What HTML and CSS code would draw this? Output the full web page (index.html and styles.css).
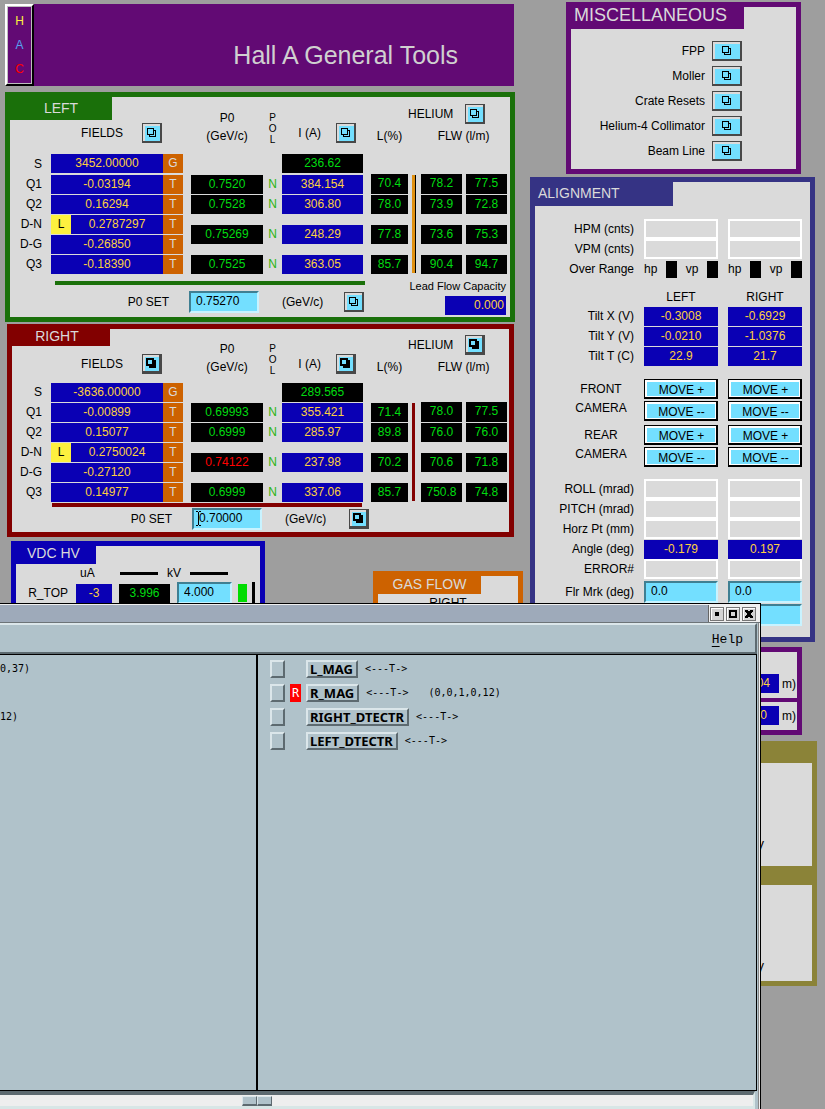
FILE: index.html
```html
<!DOCTYPE html>
<html lang="en">
<head>
<meta charset="utf-8">
<title>Hall A General Tools</title>
<link rel="stylesheet" href="styles.css">
</head>
<body>
<svg class="defs" aria-hidden="true">
  <symbol id="related" viewBox="0 0 10 10"><path d="M.5.5h6v6h-6zM7 2.500h1.500v6h-6V7" fill="none" stroke="#000" shape-rendering="crispEdges"/></symbol>
  <symbol id="related-bold" viewBox="0 0 10 10"><path d="M0 0h8v2h2v8H3V8H0z"/><path d="M2 2h4v4H2z" fill="#73dfff"/></symbol>
</svg>
<main class="desk">
  <div class="col">
    <header class="banner">
      <button class="hac"><span class="h">H</span><span class="a">A</span><span class="c">C</span></button>
      <h1>Hall A General Tools</h1>
    </header>

    <section class="panel arm left">
      <h2>LEFT</h2>
      <table>
        <colgroup><col class="c-label"><col class="c-field"><col class="c-unit"><col class="c-p0"><col class="c-pol"><col class="c-cur"><col class="c-lvl"><col class="c-bar"><col class="c-flw"><col class="c-flw2"><col class="c-end"></colgroup>
        <thead><tr>
          <th colspan="2"><div class="hd fields">FIELDS <button class="icon" aria-label="Fields"><svg><use href="#related"/></svg></button></div></th>
          <th></th>
          <th class="in"><div class="two">P0<br>(GeV/c)</div></th>
          <th><div class="pol">P<br>O<br>L</div></th>
          <th><div class="hd cur">I (A) <button class="icon" aria-label="Current"><svg><use href="#related"/></svg></button></div></th>
          <th class="in"><div class="two">L(%)</div></th>
          <th colspan="3"><div class="hd he">HELIUM <button class="icon" aria-label="Helium"><svg><use href="#related"/></svg></button></div><div class="flw">FLW (l/m)</div></th>
          <th></th>
        </tr></thead>
        <tbody>
          <tr class="first"><th>S</th><td><span class="v">3452.00000</span></td><td><span class="u">G</span></td><td></td><td></td><td><span class="g">236.62</span></td><td></td><td></td><td></td><td></td><td></td></tr>
          <tr><th>Q1</th><td><span class="v">-0.03194</span></td><td><span class="u">T</span></td><td class="in"><span class="g">0.7520</span></td><td class="n">N</td><td><span class="v">384.154</span></td><td class="in"><span class="g join">70.4</span></td><td rowspan="5" class="bar"><i></i></td><td><span class="g join">78.2</span></td><td class="in4"><span class="g join">77.5</span></td><td></td></tr>
          <tr><th>Q2</th><td><span class="v">0.16294</span></td><td><span class="u">T</span></td><td class="in"><span class="g">0.7528</span></td><td class="n">N</td><td><span class="v">306.80</span></td><td class="in"><span class="g">78.0</span></td><td><span class="g">73.9</span></td><td class="in4"><span class="g">72.8</span></td><td></td></tr>
          <tr><th>D-N</th><td><span class="v dn"><b>L</b><span>0.2787297</span></span></td><td><span class="u">T</span></td><td class="in" rowspan="2"><span class="g">0.75269</span></td><td class="n" rowspan="2">N</td><td rowspan="2"><span class="v">248.29</span></td><td class="in" rowspan="2"><span class="g">77.8</span></td><td rowspan="2"><span class="g">73.6</span></td><td class="in4" rowspan="2"><span class="g">75.3</span></td><td></td></tr>
          <tr><th>D-G</th><td><span class="v">-0.26850</span></td><td><span class="u">T</span></td><td></td></tr>
          <tr><th>Q3</th><td><span class="v">-0.18390</span></td><td><span class="u">T</span></td><td class="in"><span class="g">0.7525</span></td><td class="n">N</td><td><span class="v">363.05</span></td><td class="in"><span class="g">85.7</span></td><td><span class="g">90.4</span></td><td class="in4"><span class="g">94.7</span></td><td></td></tr>
        </tbody>
      </table>
      <div class="foot">
        <div class="setbox">
          <hr>
          <div class="set"><label for="p0l">P0 SET</label><input id="p0l" value="0.75270"><span class="gev">(GeV/c)</span><button class="icon" aria-label="Set left momentum"><svg><use href="#related"/></svg></button></div>
        </div>
        <div class="lead">Lead Flow Capacity<span class="v">0.000</span></div>
      </div>
    </section>

    <section class="panel arm right">
      <h2>RIGHT</h2>
      <table>
        <colgroup><col class="c-label"><col class="c-field"><col class="c-unit"><col class="c-p0"><col class="c-pol"><col class="c-cur"><col class="c-lvl"><col class="c-bar"><col class="c-flw"><col class="c-flw2"><col class="c-end"></colgroup>
        <thead><tr>
          <th colspan="2"><div class="hd fields">FIELDS <button class="icon" aria-label="Fields"><svg><use href="#related-bold"/></svg></button></div></th>
          <th></th>
          <th class="in"><div class="two">P0<br>(GeV/c)</div></th>
          <th><div class="pol">P<br>O<br>L</div></th>
          <th><div class="hd cur">I (A) <button class="icon" aria-label="Current"><svg><use href="#related-bold"/></svg></button></div></th>
          <th class="in"><div class="two">L(%)</div></th>
          <th colspan="3"><div class="hd he">HELIUM <button class="icon" aria-label="Helium"><svg><use href="#related-bold"/></svg></button></div><div class="flw">FLW (l/m)</div></th>
          <th></th>
        </tr></thead>
        <tbody>
          <tr><th>S</th><td><span class="v">-3636.00000</span></td><td><span class="u">G</span></td><td></td><td></td><td><span class="g">289.565</span></td><td></td><td></td><td></td><td></td><td></td></tr>
          <tr><th>Q1</th><td><span class="v">-0.00899</span></td><td><span class="u">T</span></td><td class="in"><span class="g">0.69993</span></td><td class="n">N</td><td><span class="v">355.421</span></td><td class="in"><span class="g">71.4</span></td><td rowspan="5" class="bar"><i></i></td><td><span class="g join">78.0</span></td><td class="in4"><span class="g join">77.5</span></td><td></td></tr>
          <tr><th>Q2</th><td><span class="v">0.15077</span></td><td><span class="u">T</span></td><td class="in"><span class="g">0.6999</span></td><td class="n">N</td><td><span class="v">285.97</span></td><td class="in"><span class="g">89.8</span></td><td><span class="g">76.0</span></td><td class="in4"><span class="g">76.0</span></td><td></td></tr>
          <tr><th>D-N</th><td><span class="v dn"><b>L</b><span>0.2750024</span></span></td><td><span class="u">T</span></td><td class="in" rowspan="2"><span class="g alarm">0.74122</span></td><td class="n" rowspan="2">N</td><td rowspan="2"><span class="v">237.98</span></td><td class="in" rowspan="2"><span class="g">70.2</span></td><td rowspan="2"><span class="g">70.6</span></td><td class="in4" rowspan="2"><span class="g">71.8</span></td><td></td></tr>
          <tr><th>D-G</th><td><span class="v">-0.27120</span></td><td><span class="u">T</span></td><td></td></tr>
          <tr><th>Q3</th><td><span class="v">0.14977</span></td><td><span class="u">T</span></td><td class="in"><span class="g">0.6999</span></td><td class="n">N</td><td><span class="v">337.06</span></td><td class="in"><span class="g">85.7</span></td><td><span class="g">750.8</span></td><td class="in4"><span class="g">74.8</span></td><td></td></tr>
        </tbody>
      </table>
      <div class="foot">
        <div class="setbox">
          <hr>
          <div class="set"><label for="p0r">P0 SET</label><span class="entry"><input id="p0r" value="0.70000"><svg class="ibeam" viewBox="0 0 5 15" aria-hidden="true"><path d="M0 .5h2M3 .5h2M2.500 1v13M0 14.500h2M3 14.500h2" stroke="#000" shape-rendering="crispEdges"/></svg></span><span class="gev">(GeV/c)</span><button class="icon" aria-label="Set right momentum"><svg><use href="#related-bold"/></svg></button></div>
        </div>
      </div>
    </section>

    <div class="lower">
      <section class="panel vdc">
        <h2>VDC HV</h2>
        <div class="heads"><span class="ua">uA</span><span class="kv"><i></i>kV<i></i></span></div>
        <div class="hv">
          <label for="rtop">R_TOP</label><span class="v">-3</span><span class="g">3.996</span><input id="rtop" value="4.000"><i class="lamp"></i><i class="post"></i>
        </div>
      </section>
      <section class="panel gas">
        <h2>GAS FLOW</h2>
        <div class="arms">RIGHT</div>
      </section>
    </div>
  </div>

  <div class="col">
    <section class="panel misc">
      <h2>MISCELLANEOUS</h2>
      <div class="links">
        <label for="m1">FPP</label><button id="m1" class="icon wide"><svg><use href="#related"/></svg></button>
        <label for="m2">Moller</label><button id="m2" class="icon wide"><svg><use href="#related"/></svg></button>
        <label for="m3">Crate Resets</label><button id="m3" class="icon wide"><svg><use href="#related"/></svg></button>
        <label for="m4">Helium-4 Collimator</label><button id="m4" class="icon wide"><svg><use href="#related"/></svg></button>
        <label for="m5">Beam Line</label><button id="m5" class="icon wide"><svg><use href="#related"/></svg></button>
      </div>
    </section>

    <section class="panel align">
      <h2>ALIGNMENT</h2>
      <div class="rows">
        <span>HPM (cnts)</span><span class="blank"></span><span class="blank"></span>
        <span>VPM (cnts)</span><span class="blank"></span><span class="blank"></span>
        <span>Over Range</span><span class="range">hp<i></i>vp<i></i></span><span class="range">hp<i></i>vp<i></i></span>
      </div>
      <table class="tilt">
        <colgroup><col><col class="c-read"><col class="c-read"></colgroup>
        <thead><tr><th></th><th>LEFT</th><th>RIGHT</th></tr></thead>
        <tbody>
          <tr><th>Tilt X (V)</th><td><span class="v">-0.3008</span></td><td><span class="v">-0.6929</span></td></tr>
          <tr><th>Tilt Y (V)</th><td><span class="v">-0.0210</span></td><td><span class="v">-1.0376</span></td></tr>
          <tr><th>Tilt T (C)</th><td><span class="v">22.9</span></td><td><span class="v">21.7</span></td></tr>
        </tbody>
      </table>
      <div class="camera">
        <span class="name">FRONT<br>CAMERA</span>
        <div class="moves"><button>MOVE +</button><button>MOVE --</button></div>
        <div class="moves"><button>MOVE +</button><button>MOVE --</button></div>
        <span class="name">REAR<br>CAMERA</span>
        <div class="moves"><button>MOVE +</button><button>MOVE --</button></div>
        <div class="moves"><button>MOVE +</button><button>MOVE --</button></div>
      </div>
      <div class="rows angles">
        <span>ROLL (mrad)</span><span class="blank"></span><span class="blank"></span>
        <span>PITCH (mrad)</span><span class="blank"></span><span class="blank"></span>
        <span>Horz Pt (mm)</span><span class="blank"></span><span class="blank"></span>
        <span>Angle (deg)</span><span class="v">-0.179</span><span class="v">0.197</span>
        <span>ERROR#</span><span class="blank"></span><span class="blank"></span>
      </div>
      <div class="rows marks">
        <span>Flr Mrk (deg)</span><input aria-label="Left floor mark" value="0.0"><input aria-label="Right floor mark" value="0.0">
        <span></span><input aria-label="Left offset"><input aria-label="Right offset">
      </div>
    </section>

    <section class="panel dist">
      <div><span class="v">04</span>m)</div>
      <div class="second"><span class="v">0</span>m)</div>
    </section>

    <section class="panel olive">
      <div class="pane">V</div>
      <div class="pane second">V</div>
    </section>
  </div>
</main>

<section class="window" aria-label="Detector window">
  <div class="title">
    <div class="ctl">
      <button aria-label="Minimize"><svg viewBox="0 0 14 14"><path d="M5 5h4v4H5z"/></svg></button>
      <button aria-label="Maximize"><svg viewBox="0 0 14 14"><path d="M4 4h6v6H4z" fill="none" stroke="#000" stroke-width="2"/></svg></button>
      <button aria-label="Close"><svg viewBox="0 0 14 14"><path d="M3 3h3v1h2V3h3v2h-1v1H9v2h1v1h1v2H8v-1H6v1H3V9h1V8h1V6H4V5H3z"/></svg></button>
    </div>
  </div>
  <div class="menu"><a href="#help"><u>H</u>elp</a></div>
  <div class="split">
    <div class="side"><p>0,37)</p><p>&nbsp;</p><p>12)</p></div>
    <div class="list">
      <div class="item"><button class="tog" aria-label="Select L_MAG"></button><span class="flag"></span><button class="node">L_MAG</button><span>&lt;---T-&gt;</span></div>
      <div class="item"><button class="tog" aria-label="Select R_MAG"></button><span class="flag on">R</span><button class="node">R_MAG</button><span>&lt;---T-&gt;</span><span class="tuple">(0,0,1,0,12)</span></div>
      <div class="item"><button class="tog" aria-label="Select RIGHT_DTECTR"></button><span class="flag"></span><button class="node">RIGHT_DTECTR</button><span>&lt;---T-&gt;</span></div>
      <div class="item"><button class="tog" aria-label="Select LEFT_DTECTR"></button><span class="flag"></span><button class="node">LEFT_DTECTR</button><span>&lt;---T-&gt;</span></div>
    </div>
  </div>
  <div class="scroll"><i></i><i></i></div>
</section>
</body>
</html>
```
FILE: styles.css
```css
* { box-sizing: border-box; }
body {
  margin: 0;
  min-height: 100vh;
  position: relative;
  overflow-x: hidden;
  background: #9e9e9e;
  color: #000;
  font: 12px/18px "Liberation Sans", Arial, sans-serif;
}
.defs { display: none; }
h1, h2, p { margin: 0; font-weight: normal; }
button, input { font: inherit; color: inherit; border-radius: 0; margin: 0; }
button { padding: 0; border: 0; }

.desk {
  display: grid;
  grid-template-columns: 515fr 287fr;
  column-gap: 15px;
  padding-right: 8px;
}
.col { min-width: 0; }

/* header */
.banner {
  display: flex;
  margin: 4px 1px 0 5px;
  height: 82px;
  background: #620a74;
}
.banner h1 {
  flex: 1;
  padding: 36px 56px 0 0;
  text-align: right;
  font-size: 25px;
  line-height: 30px;
  color: #d0d0d0;
}
.hac {
  display: flex;
  flex-direction: column;
  align-items: center;
  width: 29px;
  padding-top: 3px;
  background: #620a74;
  border: 2px solid #000;
  border-top-color: #fff;
  border-left-color: #fff;
  box-shadow: inset 0 0 0 1px #bebebe;
  line-height: 24px;
}
.hac .h { color: #fdf03f; }
.hac .a { color: #55a0f0; }
.hac .c { color: #f00; }

/* panels */
.panel { --tone: #1a700a; border: 5px solid var(--tone); background: #dadada; }
.panel h2 {
  background: var(--tone);
  color: #dadada;
  font-size: 14px;
  line-height: 22px;
  justify-self: start;
  align-self: start;
}
.arm { display: grid; }
.arm h2, .arm table { grid-area: 1 / 1; }
.arm h2 { width: 102px; height: 23px; text-align: center; }
.left { margin: 6px 0 0 5px; height: 230px; }
.right { --tone: #820000; margin: 2px 1px 0 7px; height: 213px; }
.right h2 { width: 98px; height: 17px; line-height: 14px; padding-right: 8px; }

table { width: 100%; table-layout: fixed; border-collapse: collapse; }
th, td { padding: 0; font-weight: normal; text-align: center; }
.c-label { width: 41px; }
.right .c-label { width: 39px; }
.c-field { width: 112px; }
.c-unit { width: 20px; }
.c-p0 { width: 80px; }
.c-pol { width: 19px; }
.c-cur { width: 81px; }
.c-lvl { width: 45px; }
.c-bar { width: 13px; }
.c-flw { width: 41px; }
.c-flw2 { width: 45px; }
.c-end { width: 3px; }
.arm thead th { height: 56px; vertical-align: bottom; padding-bottom: 8px; white-space: nowrap; }
.right thead th { height: 53px; padding-bottom: 6px; }
.arm tbody tr { height: 20px; }
.arm tbody tr.first { height: 21px; }
.arm tbody th { text-align: right; padding-right: 9px; }
th.in, td.in { padding-left: 8px; }
td.in4 { padding-left: 4px; }
.v, .g, .u { display: block; height: 19px; line-height: 18px; text-align: center; }
.v { background: #0a00b4; color: #fdd040; }
.g { background: #000; color: #00dc10; }
.u { background: #cd6200; color: #dadada; }
.join { height: 20px; }
.alarm { color: #f00; }
.n { color: #2ab410; }
.dn { display: flex; }
.dn b { width: 20px; background: #fdf03f; color: #000; font-weight: normal; }
.dn span { flex: 1; }
.bar i { display: block; width: 4px; height: 98px; margin-left: 4px; background: #e09010; border-right: 1px solid #000; }
.right .bar i { background: #820000; border: 0; width: 3px; }

.hd { display: flex; align-items: center; }
.fields { justify-content: flex-end; gap: 19px; padding-right: 1px; }
.cur { justify-content: flex-end; gap: 15px; padding-right: 7px; }
.he { gap: 12px; }
.flw { padding-left: 12px; margin-top: 3px; }
.pol { font-size: 10px; line-height: 11px; }
thead .fields, thead .cur { margin-bottom: 2px; }

.icon {
  width: 20px;
  height: 20px;
  display: grid;
  place-items: center;
  background: #73dfff;
  border: 1px solid #484848;
  border-right-width: 2px;
  border-bottom-width: 2px;
  box-shadow: inset 2px 2px #dadada;
}
.icon svg { width: 10px; height: 10px; }
.right .icon { border-right-width: 3px; border-bottom-width: 3px; }
.wide { width: 30px; }

input {
  min-width: 0;
  padding: 0 0 2px 5px;
  height: 22px;
  background: #73dfff;
  border: 2px solid #3f7f92;
  border-right-color: #c8f3ff;
  border-bottom-color: #c8f3ff;
}
.foot { display: flex; justify-content: space-between; height: 43px; }
.setbox { width: 355px; }
hr { height: 4px; margin: 7px 0 6px 45px; border: 0; background: var(--tone); }
.set { display: flex; align-items: center; }
.set label { width: 179px; padding-right: 20px; text-align: right; }
.set input { width: 70px; }
.gev { width: 85px; padding-left: 23px; }
.lead { padding: 3px 4px 0 0; font-size: 11px; text-align: right; }
.lead .v { width: 61px; margin: 1px 0 0 auto; padding-right: 2px; text-align: right; font-size: 12px; }
.right .foot { height: 30px; }
.right .setbox { width: 358px; }
.right hr { margin: 1px 8px 1px 40px; }
.right .set label { width: 180px; }
.right .gev { width: 87px; }
.entry { position: relative; display: flex; }
.ibeam { position: absolute; left: 4px; top: 3px; width: 5px; height: 15px; }

.lower { display: flex; justify-content: space-between; margin: 4px -8px 0 11px; align-items: flex-start; }
.vdc { --tone: #0a00b4; width: 254px; height: 130px; }
.vdc h2 { width: 80px; height: 18px; line-height: 14px; padding-left: 11px; }
.heads { display: flex; height: 18px; }
.ua { width: 104px; padding-left: 64px; }
.kv { display: flex; align-items: center; gap: 9px; }
.kv i { width: 38px; height: 3px; background: #000; }
.hv { display: flex; align-items: center; }
.hv label { width: 60px; padding-right: 8px; text-align: right; }
.hv .v { width: 36px; }
.hv .g { width: 51px; margin: 0 7px; }
.hv input { width: 55px; }
.lamp { width: 9px; height: 18px; margin: 0 5px 0 6px; background: #00dc00; }
.post { width: 3px; height: 22px; background: #000; }
.gas { --tone: #cd6200; width: 150px; height: 100px; margin-top: 30px; }
.gas h2 { width: 103px; height: 18px; line-height: 16px; text-align: center; }
.arms { text-align: center; }

/* miscellaneous */
.misc { --tone: #620a74; margin: 2px 16px 0 36px; height: 172px; }
.misc h2 { width: 173px; height: 22px; line-height: 17px; padding-left: 3px; font-size: 18px; }
.links {
  display: grid;
  grid-template-columns: 1fr 30px;
  gap: 5px 7px;
  padding: 12px 54px 0 0;
  align-items: center;
  text-align: right;
}

/* alignment */
.align { --tone: #353384; margin: 3px 2px 0 0; height: 465px; }
.align h2 { width: 138px; height: 24px; padding-left: 3px; }
.rows {
  display: grid;
  grid-template-columns: 1fr 74px 74px;
  grid-auto-rows: 20px;
  column-gap: 10px;
  padding: 13px 8px 0 0;
  align-items: center;
  text-align: right;
}
.blank { height: 20px; border: 2px solid #fff; }
.rows .v { text-align: center; }
.range { display: flex; justify-content: space-between; align-items: center; }
.range i { width: 11px; height: 17px; background: #000; }
.tilt { margin: 9px 8px 0 0; width: calc(100% - 8px); }
.tilt .c-read { width: 84px; }
.tilt tr { height: 20px; }
.tilt thead tr { height: 18px; }
.tilt thead th { line-height: 18px; }
.tilt th + th, .tilt td { padding-left: 10px; }
.tilt tbody th { text-align: right; }
.camera {
  display: grid;
  grid-template-columns: 1fr 74px 74px;
  gap: 2px 10px;
  padding: 13px 8px 0 0;
}
.camera .name { justify-self: end; width: 66px; padding-top: 1px; text-align: center; line-height: 19px; }
.moves { display: grid; gap: 2px; padding-bottom: 2px; }
.moves button {
  height: 20px;
  padding: 3px 0 0 2px;
  line-height: 14px;
  background: #73dfff;
  border: 1px solid #000;
  border-right-width: 2px;
  border-bottom-width: 2px;
  box-shadow: inset 2px 2px #fff, inset -1px -1px #fff;
}
.angles { padding-top: 10px; }
.marks { grid-auto-rows: 23px; padding-top: 1px; }

.dist { --tone: #620a74; margin: 5px 15px 0 0; height: 88px; }
.dist div { height: 46px; display: flex; justify-content: flex-end; align-items: flex-end; gap: 3px; padding: 0 1px 5px 0; }
.dist .v { width: 74px; padding-right: 9px; text-align: right; }
.dist .second { height: 32px; border-top: 4px solid var(--tone); }
.dist .second .v { padding-right: 12px; }

.olive { --tone: #8b8338; margin-top: 6px; height: 245px; padding-top: 17px; background: var(--tone); }
.pane { height: 103px; padding: 74px 48px 0 0; text-align: right; background: #dadada; }
.pane.second { height: 96px; margin-top: 19px; }

/* overlapping window */
.window {
  position: absolute;
  top: 603px;
  bottom: 0;
  left: 0;
  right: 64px;
  display: flex;
  flex-direction: column;
  background: #b0c2ca;
  border-top: 1px solid #000;
  border-right: 1px solid #000;
  box-shadow: inset -1px 1px #f0f0f0, inset -2px 0 #888;
  font: 10px/18px "DejaVu Sans Mono", monospace;
}
.title {
  display: flex;
  justify-content: flex-end;
  height: 18px;
  margin-top: 1px;
  background: #9eaaba;
  border-bottom: 1px solid #6d7478;
}
.ctl { display: flex; gap: 2px; padding: 2px 4px 1px 1px; background: #f0f0f0; border-left: 1px solid #666; }
.ctl button { width: 14px; height: 14px; background: #d4d4d4; border: 1px solid #777; box-shadow: inset 1px 1px #fff; }
.ctl svg { display: block; width: 14px; height: 14px; margin: -1px; }
.menu {
  height: 31px;
  margin-right: 3px;
  padding: 5px 12px 0 0;
  text-align: right;
  border: 2px solid #5d6a70;
  border-top-color: #dbe6ea;
  border-left: 0;
  font: 13px/20px "Liberation Mono", monospace;
}
.menu a { color: #000; text-decoration: none; }
.menu u { text-underline-offset: 3px; }
.split {
  flex: 1;
  display: flex;
  margin-right: 3px;
  border: 1px solid #000;
  border-left: 0;
}
.side { width: 34%; max-width: 256px; padding-top: 5px; }
.side p { height: 24px; line-height: 18px; }
.list { flex: 1; padding: 5px 0 0 12px; border-left: 2px solid #000; }
.item { display: flex; align-items: center; height: 18px; margin-bottom: 6px; white-space: nowrap; }
.tog, .node {
  height: 18px;
  background: #b0c2ca;
  border: 2px solid #5d6a70;
  border-top-color: #dbe6ea;
  border-left-color: #dbe6ea;
}
.tog { width: 15px; }
.flag { width: 11px; margin: 0 5px; height: 18px; text-align: center; font-size: 12px; }
.flag.on { background: #f00; color: #fff; }
.node { padding: 0 3px 0 2px; margin-right: 7px; font: bold 13px/14px "Noto Sans", sans-serif; }
.tuple { margin-left: 20px; }
.scroll {
  display: flex;
  height: 18px;
  margin: 0 5px 0 0;
  padding: 1px 0 0 242px;
  background: #eee;
  border-top: 4px solid #5d6a70;
  border-bottom: 3px solid #d8e6e6;
  border-right: 2px solid #d8e6e6;
}
.scroll i {
  width: 15px;
  height: 10px;
  background: #b0c2ca;
  border: 1px solid #5d6a70;
  border-top-color: #dbe6ea;
  border-left-color: #dbe6ea;
  border-bottom-width: 2px;
}
```
